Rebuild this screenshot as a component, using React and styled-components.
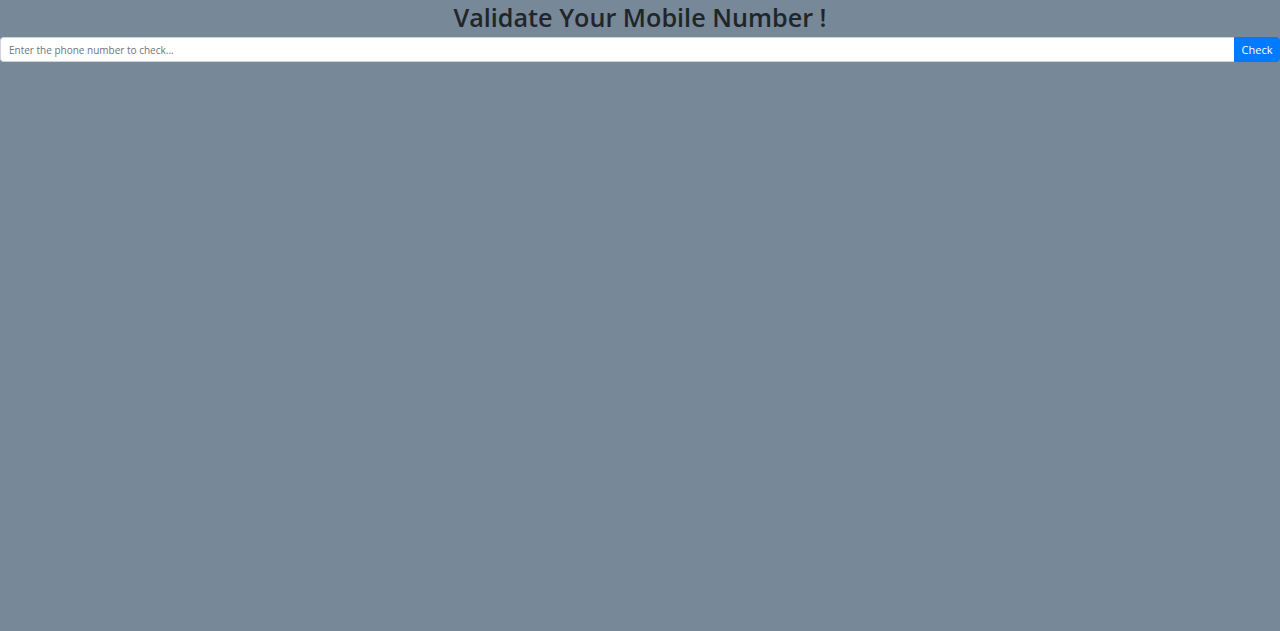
import styled, { createGlobalStyle } from "styled-components";

const GlobalStyle = createGlobalStyle`
    html, body {
        margin: 0;
        padding: 0;
        background-color: #778899;
        font-family: "Open Sans", "Noto Sans", sans-serif;
    }
    #root {
        min-height: 100vh;
    }
`;

const App = () => {
    return (
        <>
            <GlobalStyle />
            <Page>
                <Title>Validate Your Mobile Number !</Title>
                <InputGroup>
                    <PhoneInput type="text" placeholder="Enter the phone number to check..." />
                    <CheckButton>Check</CheckButton>
                </InputGroup>
            </Page>
        </>
    );
};

export default App;

const Page = styled.div`
    display: flex;
    flex-direction: column;
`;

const Title = styled.h1`
    margin: 0;
    height: 37px;
    line-height: 34px;
    font-size: 25.2px;
    font-weight: 600;
    text-align: center;
    color: #212529;
`;

const InputGroup = styled.div`
    display: flex;
    align-items: stretch;
    height: 25px;
`;

const PhoneInput = styled.input`
    flex: 1;
    min-width: 0;
    box-sizing: border-box;
    padding: 0 8px;
    font-family: inherit;
    font-size: 10px;
    color: #495057;
    background-color: #ffffff;
    border: 1px solid #ced4da;
    border-right: none;
    border-radius: 4px 0 0 4px;
    outline: none;
    &::placeholder {
        color: #6c757d;
    }
`;

const CheckButton = styled.button`
    width: 46px;
    padding: 0;
    font-family: inherit;
    font-size: 11px;
    color: #ffffff;
    background-color: #007bff;
    border: 1px solid #007bff;
    border-radius: 0 4px 4px 0;
    cursor: pointer;
`;
